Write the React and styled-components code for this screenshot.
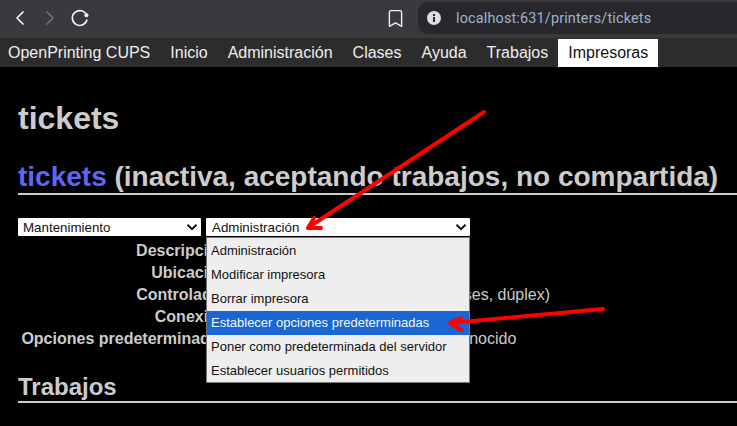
import React from 'react';
import styled, { createGlobalStyle } from 'styled-components';
import { ChevronLeft, ChevronRight, Bookmark } from 'lucide-react';

const GlobalStyle = createGlobalStyle`
  html, body {
    margin: 0;
    padding: 0;
    background: #000;
    overflow: hidden;
  }
`;

const Page = styled.div`
  position: relative;
  width: 737px;
  height: 426px;
  overflow: hidden;
  background: #000;
  font-family: "Liberation Sans", Arial, sans-serif;
  color: #ccc;
`;

const Toolbar = styled.div`
  display: flex;
  align-items: center;
  height: 38px;
  box-sizing: border-box;
  padding: 0 0 2px 8px;
  background: #39393e;
`;

const IconButton = styled.div`
  display: flex;
  align-items: center;
  justify-content: center;
  width: 24px;
  height: 24px;
  margin-right: ${(p) => p.$gap || 0}px;
  color: ${(p) => (p.$off ? '#77777b' : '#f1f1f3')};
`;

const Spacer = styled.div`
  flex: 1;
`;

const Omnibox = styled.div`
  display: flex;
  align-items: center;
  width: 319px;
  height: 32px;
  margin-left: 11px;
  padding-left: 9px;
  box-sizing: border-box;
  border-radius: 10px 0 0 10px;
  background: #28282c;
  font-family: Roboto, sans-serif;
  font-size: 14.4px;
  letter-spacing: 0.17px;
  color: #9db4cc;
`;

const InfoIcon = styled.svg`
  width: 14px;
  height: 14px;
  margin-right: 15px;
`;

const Nav = styled.nav`
  display: flex;
  align-items: flex-end;
  height: 29px;
  background: #2c2c2c;
`;

const NavItem = styled.a`
  height: 28px;
  line-height: 28px;
  padding: 0 10px;
  font-size: 16px;
  background: ${(p) => (p.$active ? '#fff' : 'transparent')};
  color: ${(p) => (p.$active ? '#111' : '#eee')};
  &:first-child {
    padding-left: 8px;
  }
`;

const Content = styled.main`
  padding: 33px 0 0 18px;
`;

const Title = styled.h1`
  margin: 0;
  font-size: 32px;
  line-height: 37px;
  font-weight: bold;
  color: #ccc;
`;

const Heading = styled.h2`
  margin: ${(p) => p.$top}px 0 0;
  font-size: ${(p) => p.$size}px;
  line-height: ${(p) => p.$line}px;
  font-weight: bold;
  color: #ccc;
  white-space: nowrap;
  border-bottom: 2px solid #ccc;
`;

const PrinterLink = styled.span`
  color: #5c68f2;
`;

const Selects = styled.div`
  display: flex;
  gap: 5px;
  margin-top: 23px;
`;

const SelectBox = styled.div`
  position: relative;
  width: ${(p) => p.$width}px;
`;

const SelectValue = styled.div`
  display: flex;
  align-items: center;
  justify-content: space-between;
  box-sizing: border-box;
  height: 18px;
  padding: 0 3px 0 ${(p) => p.$indent}px;
  background: #fff;
  border-radius: 1px;
  color: #111;
  font-size: 13.33px;
`;

const Popup = styled.ul`
  position: absolute;
  z-index: 2;
  top: 19px;
  left: 0;
  right: 0;
  margin: 0;
  padding: 1px 0 0;
  list-style: none;
  background: #eee;
  border: 1px solid #767676;
  box-sizing: border-box;
  height: 146px;
`;

const PopupItem = styled.li`
  height: 24px;
  line-height: 24px;
  padding-left: 4px;
  font-size: 13px;
  white-space: nowrap;
  background: ${(p) => (p.$active ? '#1a66d2' : 'transparent')};
  color: ${(p) => (p.$active ? '#f2f6fc' : '#111')};
`;

const InfoRows = styled.div`
  margin-top: 4px;
  font-size: 16px;
`;

const InfoRow = styled.div`
  display: flex;
  height: 22px;
  line-height: 22px;
  white-space: nowrap;
`;

const InfoLabel = styled.div`
  width: 215px;
  flex: none;
  text-align: right;
  font-weight: bold;
`;

const InfoValue = styled.div`
  padding-left: 4px;
`;

const Arrows = styled.svg`
  position: absolute;
  z-index: 3;
  top: 0;
  left: 0;
  pointer-events: none;
`;

const ArrowLine = styled.path`
  fill: none;
  stroke: #f00;
  stroke-width: 4;
  stroke-linecap: round;
  stroke-linejoin: round;
`;

const Chevron = () => (
  <svg width="12" height="12" viewBox="0 0 12 12">
    <path d="M1.5 3.8 6 8.2l4.5-4.4" fill="none" stroke="#111" strokeWidth="2" />
  </svg>
);

const navItems = [
  'OpenPrinting CUPS',
  'Inicio',
  'Administración',
  'Clases',
  'Ayuda',
  'Trabajos',
  'Impresoras',
];

const adminOptions = [
  'Administración',
  'Modificar impresora',
  'Borrar impresora',
  'Establecer opciones predeterminadas',
  'Poner como predeterminada del servidor',
  'Establecer usuarios permitidos',
];

const infoRows = [
  ['Descripción:', 'tickets'],
  ['Ubicación:', ''],
  ['Controlador:', 'Local Raw Printer (escala de grises, dúplex)'],
  ['Conexión:', 'socket://192.168.1.50'],
  ['Opciones predeterminadas:', 'none, none Tipo de papel: desconocido'],
];

const App = () => (
  <Page>
    <GlobalStyle />
    <Toolbar>
      <IconButton $gap={6}>
        <ChevronLeft size={24} strokeWidth={1.7} />
      </IconButton>
      <IconButton $off $gap={6}>
        <ChevronRight size={24} strokeWidth={1.5} />
      </IconButton>
      <IconButton>
        <svg width="20" height="20" viewBox="0 0 20 20" fill="none">
          <path d="M16.6 7.2A7.4 7.4 0 1 0 17 11.5" stroke="#f1f1f3" strokeWidth="1.6" />
          <circle cx="16.4" cy="7.2" r="2" fill="#f1f1f3" />
        </svg>
      </IconButton>
      <Spacer />
      <IconButton>
        <Bookmark size={21} strokeWidth={1.6} />
      </IconButton>
      <Omnibox>
        <InfoIcon viewBox="0 0 14 14">
          <circle cx="7" cy="7" r="7" fill="#dedee2" />
          <rect x="6" y="6" width="2" height="5" fill="#28282c" />
          <rect x="6" y="3" width="2" height="2" fill="#28282c" />
        </InfoIcon>
        localhost:631/printers/tickets
      </Omnibox>
    </Toolbar>
    <Nav>
      {navItems.map((item) => (
        <NavItem key={item} $active={item === 'Impresoras'}>
          {item}
        </NavItem>
      ))}
    </Nav>
    <Content>
      <Title>tickets</Title>
      <Heading $top={24} $size={28} $line={32}>
        <PrinterLink>tickets</PrinterLink> (inactiva, aceptando trabajos, no compartida)
      </Heading>
      <Selects>
        <SelectBox $width={183}>
          <SelectValue $indent={5}>
            Mantenimiento
            <Chevron />
          </SelectValue>
        </SelectBox>
        <SelectBox $width={264}>
          <SelectValue $indent={6}>
            Administración
            <Chevron />
          </SelectValue>
          <Popup>
            {adminOptions.map((option, i) => (
              <PopupItem key={option} $active={i === 3}>
                {option}
              </PopupItem>
            ))}
          </Popup>
        </SelectBox>
      </Selects>
      <InfoRows>
        {infoRows.map(([label, value]) => (
          <InfoRow key={label}>
            <InfoLabel>{label}</InfoLabel>
            <InfoValue>{value}</InfoValue>
          </InfoRow>
        ))}
      </InfoRows>
      <Heading $top={23} $size={24} $line={28}>
        Trabajos
      </Heading>
    </Content>
    <Arrows width="737" height="426" viewBox="0 0 737 426">
      <ArrowLine d="M484 112 309 227M308 228 314 218M308 228 321 228" />
      <ArrowLine d="M603 309 451 323M450 323 461 318M450 323 461 330" />
    </Arrows>
  </Page>
);

export default App;
